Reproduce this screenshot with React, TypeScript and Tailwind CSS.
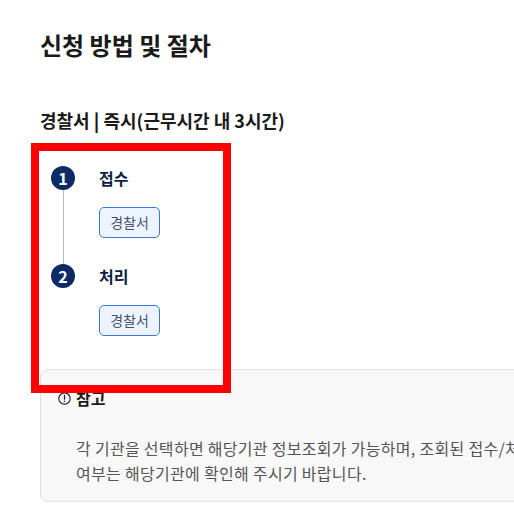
import React from "react";

const font = { fontFamily: '"Noto Sans CJK KR", "Noto Sans", sans-serif' };

function Step({ n, label, last }: { n: number; label: string; last?: boolean }) {
  return (
    <div className="flex">
      <div className="flex w-[24px] flex-col items-center">
        <div className="flex h-[24px] w-[24px] items-center justify-center rounded-full bg-[#0b2b66] text-[16px] font-bold leading-none text-white">
          {n}
        </div>
        {!last && <div className="w-px flex-1 bg-[#b8bcc6]" />}
      </div>
      <div className={`ml-[24px] ${last ? "pb-0" : "pb-[26px]"}`}>
        <div className="flex h-[24px] items-center text-[16px] font-bold text-[#0f1f45]">{label}</div>
        <div className="mt-[17px] flex h-[31px] w-[61px] items-center justify-center rounded-[5px] border border-[#3b78de] bg-[#eef4ff] text-[14px] text-[#44506e]">
          경찰서
        </div>
      </div>
    </div>
  );
}

export default function App() {
  return (
    <div className="relative h-[523px] w-[514px] overflow-hidden bg-white" style={font}>
      <div className="w-[620px] pl-[40px] pt-[29px]">
        <h1 className="text-[24px] font-bold leading-[32px] text-[#1a1a1a]">신청 방법 및 절차</h1>
        <h2 className="mt-[46px] text-[18px] font-bold leading-[26px] text-[#1a1a1a]">
          경찰서 <span className="font-black">|</span> 즉시(근무시간 내 3시간)
        </h2>
        <div className="mt-[33px] pl-[11px]">
          <Step n={1} label="접수" />
          <Step n={2} label="처리" last />
        </div>
        <div className="mt-[33px] h-[133px] rounded-[8px] border border-[#e2e2e2] bg-[#f8f8f8] pl-[17px] pt-[16px]">
          <div className="flex items-center text-[16px] font-bold leading-[24px] text-[#1a1a1a]">
            <svg width="13" height="13" viewBox="0 0 16 16" className="mr-[5px]" fill="none">
              <circle cx="8" cy="8" r="7" stroke="#222" strokeWidth="1.4" />
              <path d="M8 4.2v4.6" stroke="#222" strokeWidth="1.6" strokeLinecap="round" />
              <circle cx="8" cy="11.4" r="0.95" fill="#222" />
            </svg>
            참고
          </div>
          <p className="mt-[26px] whitespace-nowrap pl-[18px] text-[16px] leading-[25px] tracking-[0.3px] text-[#555555]">
            각 기관을 선택하면 해당기관 정보조회가 가능하며, 조회된 접수/처리기관의 처리 가능
            <br />
            여부는 해당기관에 확인해 주시기 바랍니다.
          </p>
        </div>
      </div>
      <div className="pointer-events-none absolute left-[31px] top-[143px] h-[250px] w-[200px] border-[8px] border-[#ff0000]" />
    </div>
  );
}
